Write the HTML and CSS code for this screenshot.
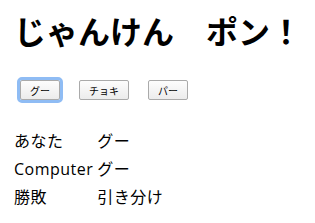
FILE: index.html
```html
<!DOCTYPE html>
<html>
<head>
	<meta charset="utf-8">
	<title>じゃんけん</title>
	<link rel="stylesheet" href="styles.css">
</head>
<body>
	<h1>じゃんけん　ポン！</h1>

	<div class="buttons">
		<button class="hand focused">グー</button>
		<button class="hand">チョキ</button>
		<button class="hand">パー</button>
	</div>

	<table class="result">
		<tr>
			<td>あなた</td>
			<td>グー</td>
		</tr>
		<tr>
			<td>Computer</td>
			<td>グー</td>
		</tr>
		<tr>
			<td>勝敗</td>
			<td>引き分け</td>
		</tr>
	</table>
</body>
</html>
```

FILE: styles.css
```css
body {
	font-family: "Liberation Sans", "Noto Sans CJK JP", sans-serif;
	margin: 8px;
	color: #000;
	background: #fff;
}

h1 {
	font-size: 32px;
	font-weight: bold;
	line-height: 37px;
	margin: 7px 0 0 6px;
}

.buttons {
	display: flex;
	gap: 19px;
	margin: 28px 0 0 12px;
}

.hand {
	font-family: "Liberation Sans", "Noto Sans CJK JP", sans-serif;
	font-size: 10px;
	height: 20px;
	padding: 0 9px;
	background: linear-gradient(#fdfdfd, #ececec);
	border: 1px solid #aaa;
	border-radius: 2px;
	color: #000;
}

.focused {
	outline: 3px solid #8fbcf4;
	outline-offset: 0;
}

.result {
	margin: 26px 0 0 3px;
	border-spacing: 2px;
	font-family: "Open Sans", "Noto Sans CJK JP", sans-serif;
	font-size: 16px;
	letter-spacing: 0.5px;
}

.result td {
	padding: 1px;
	line-height: 24px;
}
```
